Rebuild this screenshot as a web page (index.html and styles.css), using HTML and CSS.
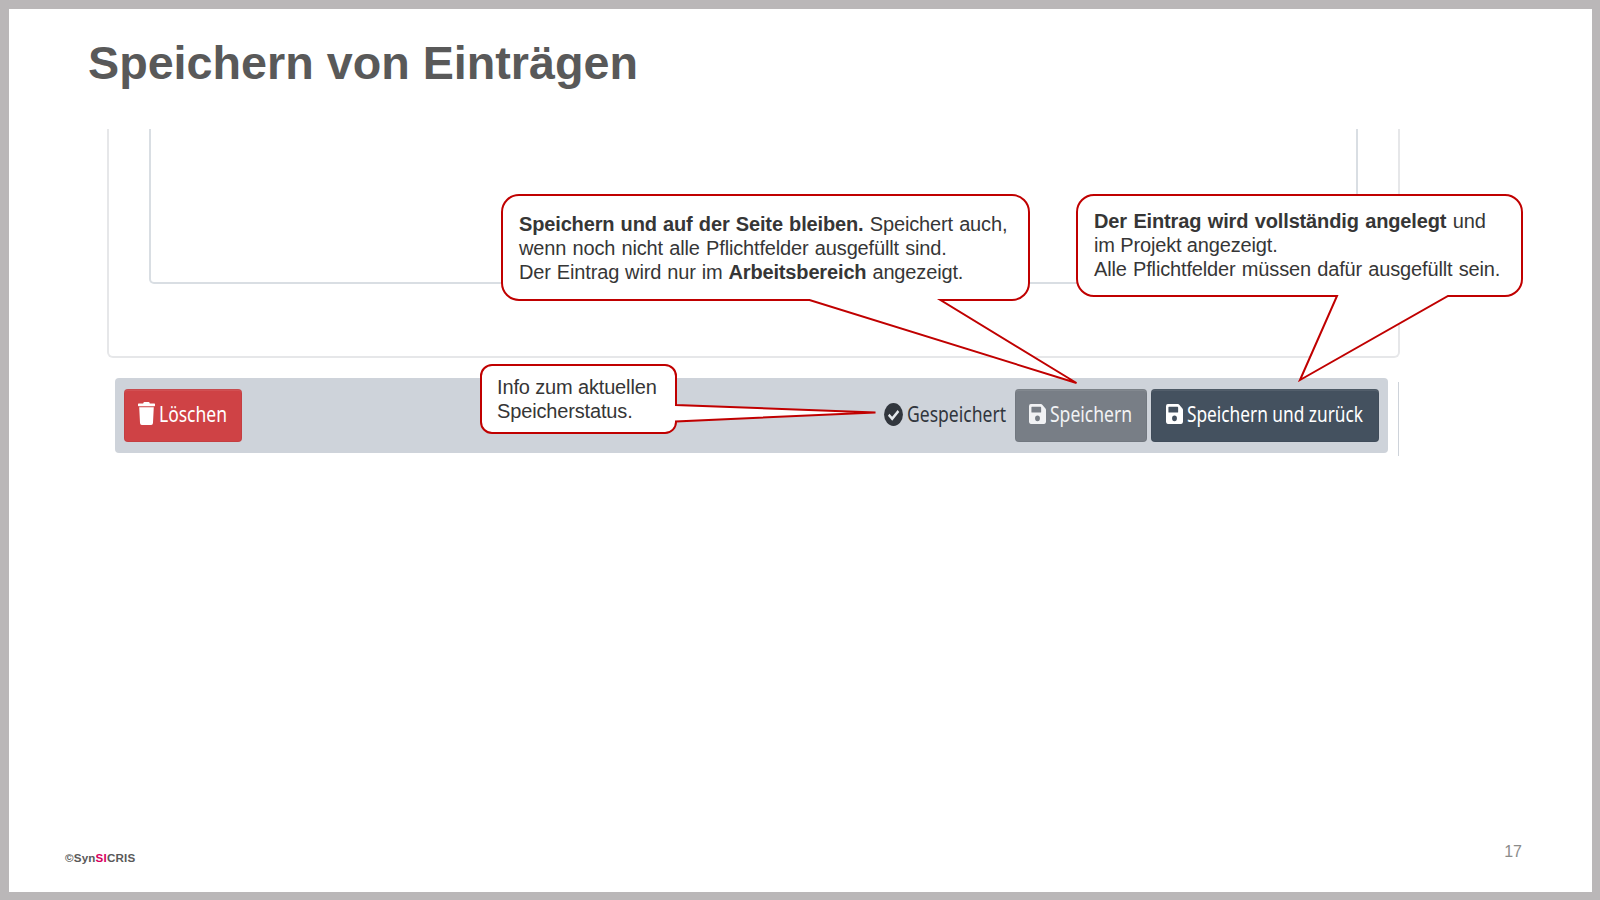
FILE: index.html
```html
<!DOCTYPE html>
<html lang="de">
<head>
<meta charset="utf-8">
<title>Speichern von Einträgen</title>
<link rel="stylesheet" href="styles.css">
</head>
<body>
<main class="slide">
  <h1 class="title">Speichern von Einträgen</h1>

  <section class="shot">
    <div class="panel"><div class="field"></div></div>
    <div class="bar-row">
      <div class="bar">
        <div class="btn btn-delete">
          <svg class="icon-trash" viewBox="0 0 448 512" preserveAspectRatio="none"><path fill="currentColor" d="M432 32H312l-9.400-18.700A24 24 0 0 0 281.100 0H166.800a23.700 23.700 0 0 0-21.400 13.300L136 32H16A16 16 0 0 0 0 48v32a16 16 0 0 0 16 16h416a16 16 0 0 0 16-16V48a16 16 0 0 0-16-16zM32 118l21.200 349a48 48 0 0 0 47.900 45h245.800a48 48 0 0 0 47.900-45L416 118z"/></svg>
          <svg class="label" width="68" height="30"><text x="0" y="21" textLength="68" lengthAdjust="spacingAndGlyphs">Löschen</text></svg>
        </div>
        <div class="status">
          <svg class="icon-check" viewBox="0 0 512 512" preserveAspectRatio="none"><circle cx="256" cy="256" r="254" fill="currentColor"/><path d="M127 262l94 88 168-172" fill="none" stroke="#e4e8ec" stroke-width="62"/></svg>
          <svg class="label" width="99" height="30"><text x="0" y="21" textLength="99" lengthAdjust="spacingAndGlyphs">Gespeichert</text></svg>
        </div>
        <div class="btn btn-save">
          <svg class="icon-save" viewBox="0 0 448 448" preserveAspectRatio="none"><path fill="currentColor" fill-rule="evenodd" d="M434 98L350 14A48 48 0 0 0 316 0H48A48 48 0 0 0 0 48v352a48 48 0 0 0 48 48h352a48 48 0 0 0 48-48V132a48 48 0 0 0-14-34zM224 384a64 64 0 1 1 0-128 64 64 0 0 1 0 128zM320 79.500V180a12 12 0 0 1-12 12H76a12 12 0 0 1-12-12V76a12 12 0 0 1 12-12h228.500a12 12 0 0 1 8.500 3.500l3.500 3.500a12 12 0 0 1 3.500 8.500z"/></svg>
          <svg class="label" width="82" height="30"><text x="0" y="21" textLength="82" lengthAdjust="spacingAndGlyphs">Speichern</text></svg>
        </div>
        <div class="btn btn-back">
          <svg class="icon-save" viewBox="0 0 448 448" preserveAspectRatio="none"><path fill="currentColor" fill-rule="evenodd" d="M434 98L350 14A48 48 0 0 0 316 0H48A48 48 0 0 0 0 48v352a48 48 0 0 0 48 48h352a48 48 0 0 0 48-48V132a48 48 0 0 0-14-34zM224 384a64 64 0 1 1 0-128 64 64 0 0 1 0 128zM320 79.500V180a12 12 0 0 1-12 12H76a12 12 0 0 1-12-12V76a12 12 0 0 1 12-12h228.500a12 12 0 0 1 8.500 3.500l3.500 3.500a12 12 0 0 1 3.500 8.500z"/></svg>
          <svg class="label" width="177" height="30"><text x="0" y="21" textLength="176" lengthAdjust="spacingAndGlyphs">Speichern und zurück</text></svg>
        </div>
      </div>
      <div class="edge"></div>
    </div>
  </section>

  <footer class="footer">
    <span class="brand">©Syn<span class="brand-accent">SI</span>CRIS</span>
    <span class="page-no">17</span>
  </footer>

  <svg class="bubbles" viewBox="9 9 1583 883">
    <path d="M519 195H1012A17 17 0 0 1 1029 212V283A17 17 0 0 1 1012 300H940.500L1076.500 383L809.500 300H519A17 17 0 0 1 502 283V212A17 17 0 0 1 519 195Z"/>
    <path d="M1094 195H1505A17 17 0 0 1 1522 212V279A17 17 0 0 1 1505 296H1448L1300 380L1337 296H1094A17 17 0 0 1 1077 279V212A17 17 0 0 1 1094 195Z"/>
    <path d="M492 365H665A11 11 0 0 1 676 376V405L875.500 412.500L676 421.500A11 11 0 0 1 665 433H492A11 11 0 0 1 481 422V376A11 11 0 0 1 492 365Z"/>
  </svg>
  <p class="note note-save">
    <span class="line gap-mid"><b>Speichern und auf der Seite bleiben.</b> Speichert auch,</span>
    <span class="line gap-mid">wenn noch nicht alle Pflichtfelder ausgefüllt sind.</span>
    <span class="line gap-small">Der Eintrag wird nur im <b>Arbeitsbereich</b> angezeigt.</span>
  </p>
  <p class="note note-back">
    <span class="line gap-wide"><b>Der Eintrag wird vollständig angelegt</b> und</span>
    <span class="line">im Projekt angezeigt.</span>
    <span class="line gap-mid">Alle Pflichtfelder müssen dafür ausgefüllt sein.</span>
  </p>
  <p class="note note-status">
    <span class="line">Info zum aktuellen</span>
    <span class="line">Speicherstatus.</span>
  </p>
</main>
</body>
</html>
```
FILE: styles.css
```css
* { box-sizing: border-box; }
body { margin: 0; background: #bab7b8; font-family: "Liberation Sans", Arial, sans-serif; }
.slide {
  position: relative;
  display: flex;
  flex-direction: column;
  width: 1600px;
  height: 900px;
  border: solid #bab7b8;
  border-width: 9px 8px 8px 9px;
  background: #fff;
  overflow: hidden;
}
.title { margin: 0; height: 120px; padding: 27px 0 0 79px; font-size: 46.7px; line-height: 55px; font-weight: 700; color: #595959; white-space: nowrap; }

.shot { width: 1293px; margin-left: 98px; }
.panel { height: 229px; padding: 0 40px; border: 2px solid #e6e7e9; border-top: 0; border-radius: 0 0 6px 6px; }
.field { height: 155px; border: 2px solid #d9dee3; border-top: 0; border-radius: 0 0 5px 5px; }
.bar-row { display: flex; justify-content: space-between; align-items: flex-start; margin-top: 20px; padding: 0 1px 0 8px; }
.bar { display: flex; align-items: center; width: 1273px; height: 75px; padding: 0 9px; border-radius: 4px; background: #ced3da; color: #31363d; }
.edge { width: 1px; height: 74px; margin-top: 4px; background: #ced3da; }
.btn { display: flex; align-items: center; height: 53px; border-radius: 4px; box-shadow: inset 0 0 0 1px rgba(0, 0, 0, 0.05), inset 0 2px 0 rgba(255, 255, 255, 0.08); }
.btn-delete { width: 118px; padding-left: 13.5px; margin-right: auto; background: #cf4245; color: #fff; }
.btn-save { width: 132px; padding-left: 14px; margin-left: 9px; background: #787e86; color: #f1f2f4; }
.btn-back { width: 228px; padding-left: 15px; margin-left: 4px; background: #44515f; color: #fff; }
.status { display: flex; align-items: center; }
.label { display: block; margin-left: 4px; overflow: visible; }
.label text { font-family: "Noto Sans", sans-serif; font-size: 21px; fill: currentColor; }
.icon-trash { width: 17px; height: 23px; margin-bottom: 4px; }
.icon-check { width: 19px; height: 23px; margin-bottom: 3px; }
.icon-save { width: 17px; height: 20px; margin-bottom: 3px; }

.footer { display: flex; justify-content: space-between; align-items: flex-start; margin: auto 70px 0 56px; height: 60px; color: #595959; }
.brand { margin-top: 19px; font-size: 11.6px; line-height: 14px; font-weight: 700; letter-spacing: 0.2px; }
.brand-accent { color: #d8005f; }
.page-no { margin-top: 10px; font-size: 16px; line-height: 20px; color: #8b8b8b; }

.bubbles { position: absolute; left: 0; top: 0; width: 1583px; height: 883px; }
.bubbles path { fill: #fff; stroke: #c00000; stroke-width: 2; }
.note { position: absolute; margin: 0; font-size: 20px; line-height: 24px; letter-spacing: -0.15px; color: #363636; }
.line { display: block; width: max-content; white-space: nowrap; }
.gap-wide { word-spacing: 1.1px; }
.gap-mid { word-spacing: 0.85px; }
.gap-small { word-spacing: 0.6px; }
.note-save { left: 510px; top: 203px; }
.note-back { left: 1085px; top: 200px; }
.note-status { left: 488px; top: 366px; }
```
